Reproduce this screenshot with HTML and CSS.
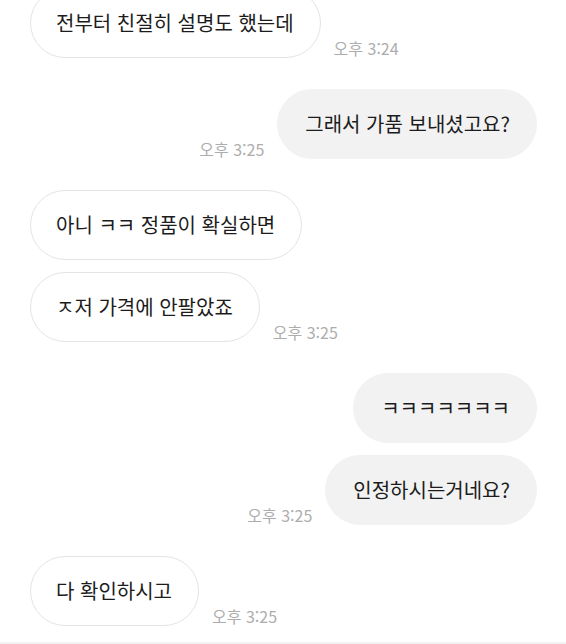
FILE: index.html
```html
<!DOCTYPE html>
<html lang="ko">
<head>
  <meta charset="UTF-8">
  <title>대화</title>
  <link rel="stylesheet" href="styles.css">
</head>
<body>
  <div class="chat">
    <div class="group">
      <div class="row in">
        <div class="bubble">전부터 친절히 설명도 했는데</div>
        <span class="time">오후 3:24</span>
      </div>
    </div>

    <div class="group">
      <div class="row out">
        <span class="time">오후 3:25</span>
        <div class="bubble">그래서 가품 보내셨고요?</div>
      </div>
    </div>

    <div class="group">
      <div class="row in">
        <div class="bubble">아니 ㅋㅋ 정품이 확실하면</div>
      </div>
      <div class="row in">
        <div class="bubble">ㅈ저 가격에 안팔았죠</div>
        <span class="time">오후 3:25</span>
      </div>
    </div>

    <div class="group">
      <div class="row out">
        <div class="bubble">ㅋㅋㅋㅋㅋㅋㅋ</div>
      </div>
      <div class="row out">
        <span class="time">오후 3:25</span>
        <div class="bubble">인정하시는거네요?</div>
      </div>
    </div>

    <div class="group">
      <div class="row in">
        <div class="bubble">다 확인하시고</div>
        <span class="time">오후 3:25</span>
      </div>
    </div>
  </div>
  <div class="composer"></div>
</body>
</html>
```

FILE: styles.css
```css
html, body {
  margin: 0;
  height: 644px;
  overflow: hidden;
  background: #fff;
}
body {
  display: flex;
  flex-direction: column;
  font-family: "Noto Sans CJK KR", "Noto Sans", sans-serif;
  color: #1c1c1c;
}
.chat {
  display: flex;
  flex-direction: column;
  gap: 31px;
  margin-top: -12px;
  padding: 0 29px 0 30px;
}
.group {
  display: flex;
  flex-direction: column;
  gap: 12px;
}
.row {
  display: flex;
  align-items: flex-end;
  gap: 13px;
}
.row.out { justify-content: flex-end; }
.bubble {
  font-size: 20px;
  line-height: 24px;
  padding: 22px 26px 22px 25px;
  border-radius: 36px;
  border: 1px solid #e4e4e4;
  background: #fff;
  white-space: nowrap;
}
.out .bubble {
  background: #f2f2f2;
  border-color: #f2f2f2;
  padding-left: 27px;
}
.time {
  font-size: 16px;
  line-height: 18px;
  color: #adadad;
  margin-bottom: 1px;
  white-space: nowrap;
}
.composer {
  margin-top: auto;
  height: 2px;
  background: #f3f3f3;
}
```
